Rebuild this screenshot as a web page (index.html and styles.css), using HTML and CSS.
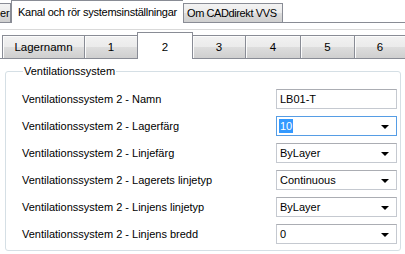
FILE: index.html
```html
<!DOCTYPE html>
<html lang="sv">
<head>
    <meta charset="UTF-8">
    <title>Kanal och rör systemsinställningar</title>
    <link rel="stylesheet" href="styles.css">
</head>
<body>
    <div class="top-tabs">
        <div class="tab tab-cut">er</div>
        <div class="tab tab-active">Kanal och rör systemsinställningar</div>
        <div class="tab tab-om">Om CADdirekt VVS</div>
    </div>

    <div class="page">
        <div class="inner-tabs">
            <div class="itab w-lager">Lagernamn</div>
            <div class="itab w-1">1</div>
            <div class="itab itab-active w-2">2</div>
            <div class="itab w-3">3</div>
            <div class="itab w-4">4</div>
            <div class="itab w-5">5</div>
            <div class="itab w-6">6</div>
        </div>

        <fieldset class="group">
            <legend>Ventilationssystem</legend>
            <div class="rows">
                <div class="row">
                    <span class="label">Ventilationssystem 2 - Namn</span>
                    <div class="field textbox">LB01-T</div>
                </div>
                <div class="row">
                    <span class="label">Ventilationssystem 2 - Lagerfärg</span>
                    <div class="field combo combo-focus"><span class="selected">10</span><span class="arrow"></span></div>
                </div>
                <div class="row">
                    <span class="label">Ventilationssystem 2 - Linjefärg</span>
                    <div class="field combo"><span>ByLayer</span><span class="arrow"></span></div>
                </div>
                <div class="row">
                    <span class="label">Ventilationssystem 2 - Lagerets linjetyp</span>
                    <div class="field combo"><span>Continuous</span><span class="arrow"></span></div>
                </div>
                <div class="row">
                    <span class="label">Ventilationssystem 2 - Linjens linjetyp</span>
                    <div class="field combo"><span>ByLayer</span><span class="arrow"></span></div>
                </div>
                <div class="row">
                    <span class="label">Ventilationssystem 2 - Linjens bredd</span>
                    <div class="field combo"><span>0</span><span class="arrow"></span></div>
                </div>
            </div>
        </fieldset>
    </div>
</body>
</html>
```

FILE: styles.css
```css
body {
    margin: 0;
    width: 405px;
    height: 254px;
    overflow: hidden;
    background: #fff;
    color: #000;
    font-family: "Liberation Sans", Arial, sans-serif;
    font-size: 11px;
}

/* outer tab strip */
.top-tabs {
    display: flex;
    align-items: flex-end;
    height: 22px;
    border-bottom: 1px solid #898c95;
}
.tab {
    box-sizing: border-box;
    flex: none;
    height: 19px;
    line-height: 18px;
    border: 1px solid #898c95;
    border-bottom: none;
    background: linear-gradient(#f3f3f3, #ebebeb 50%, #dddddd 51%, #cfcfcf);
    white-space: nowrap;
    overflow: hidden;
}
.tab-cut {
    width: 11px;
    border-left: none;
    text-align: right;
    padding-right: 2px;
}
.tab-active {
    height: 23px;
    margin-bottom: -1px;
    width: 172px;
    padding-left: 6px;
    line-height: 22px;
    letter-spacing: -0.25px;
    background: #fff;
    border-right: none;
    position: relative;
    z-index: 1;
}
.tab-om {
    width: 100px;
    padding-left: 3px;
    letter-spacing: -0.4px;
}

/* tab page */
.page {
    margin-top: 6px;
    border-top: 1px solid #d9d9d9;
}
.inner-tabs {
    display: flex;
    align-items: flex-end;
    height: 28px;
    padding-left: 2px;
    border-bottom: 1px solid #898c95;
}
.itab {
    box-sizing: border-box;
    flex: none;
    height: 23px;
    line-height: 22px;
    text-align: center;
    font-size: 11.5px;
    border: 1px solid #898c95;
    border-bottom: none;
    border-right: none;
    box-shadow: inset 1px 1px 0 #fcfcfc;
    background: linear-gradient(#f2f2f2, #ebebeb 50%, #dddddd 51%, #cfcfcf);
}
.itab-active {
    height: 27px;
    margin-bottom: -1px;
    line-height: 28px;
    background: #fff;
    box-shadow: none;
    border-right: 1px solid #898c95;
}
.itab-active + .itab {
    border-left: none;
}
.w-lager { width: 82px; }
.w-1 { width: 53px; }
.w-2 { width: 56px; }
.w-3 { width: 52px; }
.w-4 { width: 55px; }
.w-5 { width: 54px; }
.w-6 { width: 52px; border-right: 1px solid #898c95; }

/* group box */
.group {
    margin: 6px 4px 0 5px;
    padding: 11px 3px 6px 16px;
    border: 1px solid #d5dfe5;
    border-radius: 3px;
    min-width: 0;
}
.group legend {
    margin-left: 1px;
    padding: 0 1px;
    line-height: 13px;
}
.rows {
    display: flex;
    flex-direction: column;
    gap: 7px;
}
.row {
    display: flex;
    align-items: center;
    justify-content: space-between;
    height: 20px;
}
.label {
    white-space: nowrap;
}
.field {
    box-sizing: border-box;
    width: 121px;
    height: 20px;
    display: flex;
    align-items: center;
    justify-content: space-between;
    padding: 0 7px 0 3px;
    border: 1px solid #c5c9d0;
    border-top-color: #abadb3;
    background: #fff;
}
.combo-focus {
    border-color: #569de5;
}
.selected {
    background: #3399ff;
    color: #fff;
    padding: 0 1px;
    margin-left: -1px;
    line-height: 14px;
}
.arrow {
    width: 0;
    height: 0;
    margin-top: 2px;
    border-left: 4px solid transparent;
    border-right: 4px solid transparent;
    border-top: 4px solid #000;
}
```
